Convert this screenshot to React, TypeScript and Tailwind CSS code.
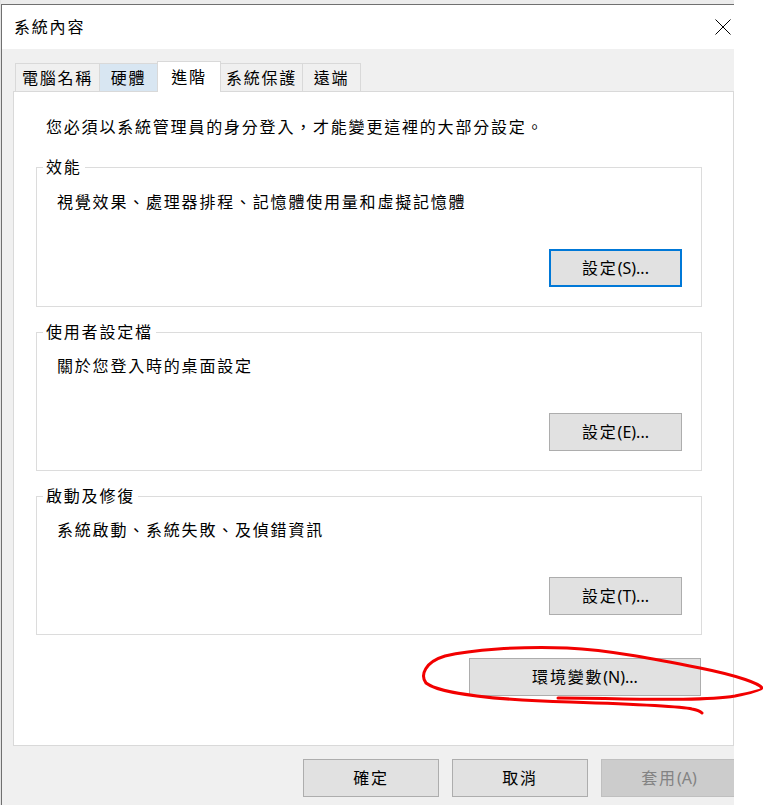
import React from 'react'

const tabs = [
  { label: '電腦名稱', w: 'w-[84px]', cls: 'border-l bg-[#f0f0f0]' },
  { label: '硬體', w: 'w-[58px]', cls: 'border-l bg-[#d8e6f2]' },
  { label: '進階', w: 'w-[64px]', cls: 'border-x bg-white h-[31px] relative z-10', active: true },
  { label: '系統保護', w: 'w-[81px]', cls: 'bg-[#f0f0f0]' },
  { label: '遠端', w: 'w-[59px]', cls: 'border-x bg-[#f0f0f0]' },
]

function Btn({ cjk, latin, focused }: { cjk: string; latin: string; focused?: boolean }) {
  return (
    <div
      className={
        'w-[133px] h-[38px] flex items-center justify-center bg-[#e1e1e1] ' +
        (focused ? 'border-2 border-[#0078d7]' : 'border border-[#adadad]')
      }
    >
      <span className="tracking-[1.8px]">{cjk}</span>
      <span className="tracking-normal">{latin}</span>
    </div>
  )
}

function Group({
  title,
  desc,
  btn,
  first,
}: {
  title: string
  desc: string
  btn: React.ReactNode
  first?: boolean
}) {
  return (
    <div className="border border-[#dcdcdc] w-[666px] ml-[22px] flex flex-col">
      <div className="-mt-[11px] ml-[6px] px-[3px] bg-white w-fit leading-[20px]">{title}</div>
      <div className={(first ? 'mt-[15px]' : 'mt-[14px]') + ' pl-[20px] leading-[20px]'}>{desc}</div>
      <div className="mt-[37px] mb-[19px] mr-[19px] flex justify-end">{btn}</div>
    </div>
  )
}

export default function App() {
  return (
    <div className="relative w-[763px] h-[805px] bg-white overflow-hidden flex text-[16px] text-black tracking-[1.8px] font-[family-name:'Noto_Sans','Noto_Sans_CJK_TC',sans-serif]">
      <div className="w-[1px] bg-[#e4e4e4]" />
      <div className="w-[733px] flex flex-col overflow-hidden">
        <div className="h-[4px] bg-[#ececec]" />
        <div className="flex-1 border-l border-t border-[#707070] flex flex-col">
          {/* title bar */}
          <div className="h-[44px] bg-white flex items-center justify-between pl-[12px] pr-[3px]">
            <span>系統內容</span>
            <svg width="16" height="16" viewBox="0 0 16 16" className="mb-[1px]">
              <path d="M0.5 0.5 L15.5 15.5 M15.5 0.5 L0.5 15.5" stroke="#000" strokeWidth="1" fill="none" />
            </svg>
          </div>

          {/* body */}
          <div className="flex-1 bg-[#f0f0f0] pt-[12px] pl-[11px] flex flex-col">
            <div className="flex items-end h-[31px] ml-[2px]">
              {tabs.map((t) => (
                <div
                  key={t.label}
                  className={
                    t.w +
                    ' border-t border-[#d9d9d9] flex items-center justify-center ' +
                    (t.active ? '' : 'h-[29px] ') +
                    t.cls
                  }
                >
                  {t.label}
                </div>
              ))}
            </div>

            <div className="-mt-px h-[655px] bg-white border border-[#d9d9d9] flex flex-col">
              <div className="mt-[25px] ml-[32px] leading-[20px]">
                您必須以系統管理員的身分登入，才能變更這裡的大部分設定。
              </div>

              <div className="mt-[30px]">
                <Group
                  first
                  title="效能"
                  desc="視覺效果、處理器排程、記憶體使用量和虛擬記憶體"
                  btn={<Btn cjk="設定" latin="(S)..." focused />}
                />
              </div>
              <div className="mt-[25px]">
                <Group title="使用者設定檔" desc="關於您登入時的桌面設定" btn={<Btn cjk="設定" latin="(E)..." />} />
              </div>
              <div className="mt-[25px]">
                <Group
                  title="啟動及修復"
                  desc="系統啟動、系統失敗、及偵錯資訊"
                  btn={<Btn cjk="設定" latin="(T)..." />}
                />
              </div>

              <div className="mt-[23px] ml-[22px] w-[666px] flex justify-end">
                <div className="mr-[1px] w-[232px] h-[38px] flex items-center justify-center bg-[#e1e1e1] border border-[#adadad]">
                  <span>環境變數</span>
                  <span className="tracking-normal">(N)...</span>
                </div>
              </div>
            </div>

            {/* dialog buttons */}
            <div className="mt-[13px] flex gap-[13px] pl-[290px] whitespace-nowrap">
              <div className="shrink-0 w-[136px] h-[38px] flex items-center justify-center bg-[#e1e1e1] border border-[#adadad]">
                確定
              </div>
              <div className="shrink-0 w-[136px] h-[38px] flex items-center justify-center bg-[#e1e1e1] border border-[#adadad]">
                取消
              </div>
              <div className="shrink-0 w-[136px] h-[38px] flex items-center justify-center bg-[#cccccc] border border-[#bfbfbf] text-[#838383]">
                <span>套用</span>
                <span className="tracking-normal">(A)</span>
              </div>
            </div>
          </div>
        </div>
      </div>

      {/* red hand-drawn annotation */}
      <svg className="absolute left-0 top-0 pointer-events-none" width="763" height="805" viewBox="0 0 763 805">
        <path
          d="M558,698 C620,698 700,702 735,696 C750,693 762,690 762,688 C760,684 740,676 700,668 C660,660 610,650 567,648 C520,646 470,650 445,656 C425,662 420,675 426,683 C440,694 500,700 570,702 C630,704 680,706 692,709 C698,710 701,712 702,713"
          stroke="#f20000"
          strokeWidth="3"
          fill="none"
          strokeLinecap="round"
          strokeLinejoin="round"
        />
      </svg>
    </div>
  )
}
